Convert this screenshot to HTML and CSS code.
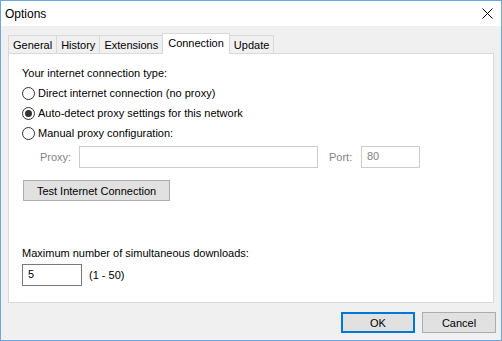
FILE: index.html
```html
<!DOCTYPE html>
<html lang="en">
<head>
    <meta charset="UTF-8">
    <title>Options</title>
    <link rel="stylesheet" href="styles.css">
</head>
<body>
    <div class="window">
        <div class="titlebar">
            <span class="title">Options</span>
            <svg class="close" width="11" height="11" viewBox="0 0 11 11">
                <path d="M0.5 0.5 L10.5 10.5 M10.5 0.5 L0.5 10.5" stroke="#000" stroke-width="1" fill="none"/>
            </svg>
        </div>
        <div class="client">
            <div class="tabs">
                <div class="tab">General</div>
                <div class="tab">History</div>
                <div class="tab">Extensions</div>
                <div class="tab active">Connection</div>
                <div class="tab">Update</div>
            </div>
            <div class="panel">
                <div class="heading">Your internet connection type:</div>
                <div class="radio"><span class="circle"></span>Direct internet connection (no proxy)</div>
                <div class="radio"><span class="circle checked"></span>Auto-detect proxy settings for this network</div>
                <div class="radio"><span class="circle"></span>Manual proxy configuration:</div>
                <div class="proxy-row">
                    <span class="muted proxy-label">Proxy:</span>
                    <div class="field disabled proxy-field"></div>
                    <span class="muted port-label">Port:</span>
                    <div class="field disabled port-field">80</div>
                </div>
                <button class="btn test">Test Internet Connection</button>
                <div class="downloads-label">Maximum number of simultaneous downloads:</div>
                <div class="downloads-row">
                    <div class="field downloads-field">5</div>
                    <span class="range">(1 - 50)</span>
                </div>
            </div>
            <div class="footer">
                <button class="btn default">OK</button>
                <button class="btn">Cancel</button>
            </div>
        </div>
    </div>
</body>
</html>
```

FILE: styles.css
```css
body {
    margin: 0;
    font-family: 'Liberation Sans', Arial, sans-serif;
    font-size: 11px;
    color: #000;
}

.window {
    width: 502px;
    height: 341px;
    box-sizing: border-box;
    border: 1px solid #6ea6e0;
    background-color: #f0f0f0;
    display: flex;
    flex-direction: column;
}

.titlebar {
    height: 25px;
    background-color: #fff;
    display: flex;
    align-items: center;
    justify-content: space-between;
    padding: 0 8px 0 4px;
}

.title {
    font-size: 12px;
}

.client {
    flex: 1;
    padding: 7px 7px 0 7px;
}

.tabs {
    display: flex;
    align-items: flex-end;
    height: 20px;
}

.tab {
    height: 17px;
    line-height: 18px;
    padding: 0 4px;
    border: 1px solid #d9d9d9;
    border-bottom: none;
    margin-left: -1px;
    background-color: #f0f0f0;
}

.tab:first-child {
    margin-left: 0;
}

.tab.active {
    height: 20px;
    line-height: 18px;
    padding: 0 5px;
    background-color: #fff;
    position: relative;
    z-index: 1;
    margin-bottom: -1px;
}

.panel {
    height: 250px;
    box-sizing: border-box;
    background-color: #fff;
    border: 1px solid #d9d9d9;
    padding: 0 13px;
}

.heading {
    margin-top: 12px;
    line-height: 15px;
    margin-bottom: 2px;
}

.radio {
    height: 20px;
    display: flex;
    align-items: center;
}

.circle {
    width: 13px;
    height: 13px;
    box-sizing: border-box;
    border: 1px solid #333;
    border-radius: 50%;
    margin-right: 3px;
    display: flex;
    align-items: center;
    justify-content: center;
}

.circle.checked::after {
    content: '';
    width: 7px;
    height: 7px;
    border-radius: 50%;
    background-color: #333;
}

.proxy-row {
    display: flex;
    align-items: center;
    margin-top: 3px;
    padding-left: 18px;
}

.muted {
    color: #838383;
}

.proxy-label {
    width: 39px;
}

.port-label {
    width: 32px;
    margin-left: 11px;
}

.field {
    height: 22px;
    box-sizing: border-box;
    border: 1px solid #7a7a7a;
    padding: 0 5px;
    line-height: 19px;
}

.field.disabled {
    border-color: #cccccc;
    color: #838383;
}

.proxy-field {
    width: 239px;
}

.port-field {
    width: 59px;
}

.btn {
    font-family: inherit;
    font-size: 11px;
    color: #000;
    height: 21px;
    background-color: #e1e1e1;
    border: 1px solid #adadad;
    padding: 0;
}

.test {
    display: block;
    margin: 12px 0 0 1px;
    width: 147px;
}

.downloads-label {
    margin-top: 45px;
    line-height: 15px;
}

.downloads-row {
    display: flex;
    align-items: center;
    margin-top: 3px;
}

.downloads-field {
    width: 60px;
}

.range {
    margin-left: 7px;
}

.footer {
    display: flex;
    justify-content: flex-end;
    gap: 7px;
    margin: 9px -2px 0 0;
}

.footer .btn {
    width: 74px;
}

.btn.default {
    border: 2px solid #0078d7;
}
```
